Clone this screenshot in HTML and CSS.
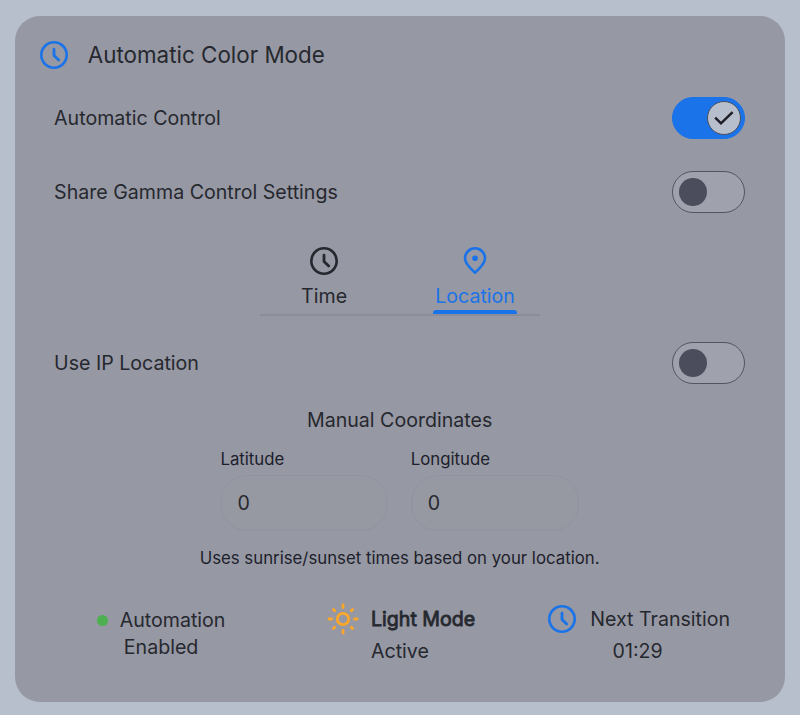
FILE: index.html
```html
<!DOCTYPE html>
<html lang="en">

<head>
    <meta charset="UTF-8">
    <meta name="viewport" content="width=device-width, initial-scale=1.0">
    <title>Automatic Color Mode</title>
    <link rel="stylesheet" href="styles.css">
</head>

<body>
    <!-- Shared icon shapes -->
    <svg class="icon-defs" width="0" height="0">
        <symbol id="icon-clock" viewBox="0 0 28 28">
            <circle cx="14" cy="14" r="12.7" fill="none" stroke="currentColor" stroke-width="2.6"/>
            <path d="M14 8.2v6.2l4.7 4.7" fill="none" stroke="currentColor" stroke-width="2.8" stroke-linecap="round" stroke-linejoin="round"/>
        </symbol>
    </svg>

    <div class="card">
        <div class="card-header">
            <svg class="icon accent"><use href="#icon-clock"/></svg>
            <span class="title">Automatic Color Mode</span>
        </div>

        <div class="row">
            <span>Automatic Control</span>
            <div class="toggle on">
                <div class="knob">
                    <svg width="20" height="16" viewBox="0 0 20 16">
                        <path d="M1.2 7.6l5.8 5.7L18.6 2.2" fill="none" stroke="currentColor" stroke-width="2.5"/>
                    </svg>
                </div>
            </div>
        </div>

        <div class="row row-share">
            <span>Share Gamma Control Settings</span>
            <div class="toggle"><div class="knob"></div></div>
        </div>

        <div class="tabs">
            <div class="tab">
                <svg class="icon"><use href="#icon-clock"/></svg>
                <span class="tab-label">Time</span>
            </div>
            <div class="tab active">
                <svg class="icon" viewBox="0 0 28 28">
                    <path d="M14 25.7C9.6 21.8 4 16.3 4 11.3a10 10 0 0 1 20 0c0 5-5.6 10.5-10 14.4z" fill="none" stroke="currentColor" stroke-width="2.6" stroke-linejoin="round"/>
                    <circle cx="14" cy="11.2" r="2.8" fill="currentColor"/>
                </svg>
                <span class="tab-label">Location</span>
            </div>
        </div>

        <div class="row row-ip">
            <span>Use IP Location</span>
            <div class="toggle"><div class="knob"></div></div>
        </div>

        <div class="section-title">Manual Coordinates</div>

        <div class="coordinates">
            <div class="field">
                <label for="latitude">Latitude</label>
                <input type="text" id="latitude" value="0">
            </div>
            <div class="field">
                <label for="longitude">Longitude</label>
                <input type="text" id="longitude" value="0">
            </div>
        </div>

        <div class="hint">Uses sunrise/sunset times based on your location.</div>

        <div class="status">
            <div class="status-item automation">
                <div><span class="dot"></span>Automation<br>Enabled</div>
            </div>
            <div class="status-item mode">
                <svg class="icon-sun" width="32" height="32" viewBox="0 0 32 32">
                    <g fill="none" stroke="currentColor" stroke-width="2.8" stroke-linecap="round">
                        <circle cx="16" cy="16" r="5.7"/>
                        <path d="M16 2v2.5M16 27.5V30M2 16h2.5M27.5 16H30M6.5 6.5l1.2 1.2M24.3 24.3l1.2 1.2M6.5 25.5l1.2-1.2M24.3 7.7l1.2-1.2"/>
                    </g>
                </svg>
                <div><span class="strong">Light Mode</span><br>Active</div>
            </div>
            <div class="status-item transition">
                <svg class="icon accent"><use href="#icon-clock"/></svg>
                <span>Next Transition</span>
                <span class="time">01:29</span>
            </div>
        </div>
    </div>
</body>

</html>
```
FILE: styles.css
```css
* {
    box-sizing: border-box;
}

body {
    margin: 0;
    padding: 16px 15.4px 0 14.6px;
    background-color: #b8bfcc;
    color: #26282f;
    font-family: Inter, "Liberation Sans", sans-serif;
    font-size: 19.6px;
    line-height: 26px;
}

.icon-defs {
    position: absolute;
}

.card {
    height: 686px;
    padding: 20px 39.2px 0;
    border-radius: 25px;
    background-color: #9698a3;
}

.card-header {
    display: flex;
    align-items: center;
    gap: 20px;
    height: 38px;
    margin-left: -14px;
}

.title {
    font-size: 22.4px;
}

.icon {
    flex: none;
    width: 28px;
    height: 28px;
}

.accent {
    color: #1a73e8;
}

.row {
    display: flex;
    align-items: center;
    justify-content: space-between;
    height: 42px;
    margin-top: 23px;
    padding-left: 0.3px;
}

.row-share {
    margin-top: 32px;
}

.row-ip {
    margin-top: 26px;
}

/* Toggles */
.toggle {
    display: flex;
    align-items: center;
    width: 73px;
    height: 42px;
    padding: 0 6px;
    border: 1px solid #535563;
    border-radius: 21px;
    background-color: #9fa1ad;
}

.knob {
    width: 28px;
    height: 28px;
    border-radius: 50%;
    background-color: #4b4d5c;
}

.toggle.on {
    justify-content: flex-end;
    padding-right: 3px;
    border-color: #1a73e8;
    background-color: #1a73e8;
}

.toggle.on .knob {
    display: flex;
    align-items: center;
    justify-content: center;
    width: 34px;
    height: 34px;
    border: 1px solid #4b4d5c;
    background-color: #b8bfcc;
    color: #1d1e27;
}

/* Tabs */
.tabs {
    display: flex;
    justify-content: center;
    gap: 67px;
    width: 280px;
    height: 83px;
    margin: 20px auto 0;
    padding-top: 14px;
    border-bottom: 2px solid #8b8d99;
}

.tab {
    display: flex;
    flex-direction: column;
    align-items: center;
    width: 84px;
}

.tab-label {
    margin-top: 8px;
}

.tab.active {
    color: #1a73e8;
}

.tab.active::after {
    content: "";
    width: 84px;
    height: 4px;
    margin-top: 1px;
    border-radius: 3px 3px 0 0;
    background-color: #1a73e8;
}

/* Coordinates */
.section-title {
    margin-top: 23px;
    text-align: center;
}

.coordinates {
    display: flex;
    justify-content: center;
    gap: 22.4px;
    margin-top: 15px;
}

.field {
    display: flex;
    flex-direction: column;
    width: 168px;
}

.field label,
.hint {
    color: #1d1e2b;
    font-size: 16.8px;
    line-height: 22px;
}

.field input {
    height: 56px;
    margin-top: 5px;
    padding: 0 16px;
    border: 1px solid #9193a0;
    border-radius: 27px;
    background-color: #9699a1;
    color: #26282f;
    font: inherit;
}

.hint {
    margin-top: 16px;
    text-align: center;
}

/* Status row */
.status {
    display: grid;
    grid-template-columns: repeat(3, 1fr);
    gap: 24px;
    margin-top: 34px;
}

.status-item {
    display: flex;
    justify-content: center;
}

.automation {
    padding-top: 4px;
    line-height: 27px;
    text-align: center;
}

.dot {
    display: inline-block;
    width: 11px;
    height: 11px;
    margin-right: 12px;
    border-radius: 50%;
    background-color: #4caf50;
    vertical-align: 1px;
}

.mode {
    gap: 12px;
    padding-left: 3px;
    line-height: 32px;
}

.icon-sun {
    color: #ffa726;
}

.strong {
    -webkit-text-stroke: 0.8px currentColor;
}

.transition {
    display: grid;
    grid-template-columns: auto auto;
    column-gap: 14px;
    align-items: center;
    padding-left: 2px;
    line-height: 32px;
}

.time {
    grid-column: 1 / -1;
    padding-right: 3px;
    text-align: center;
}
```
